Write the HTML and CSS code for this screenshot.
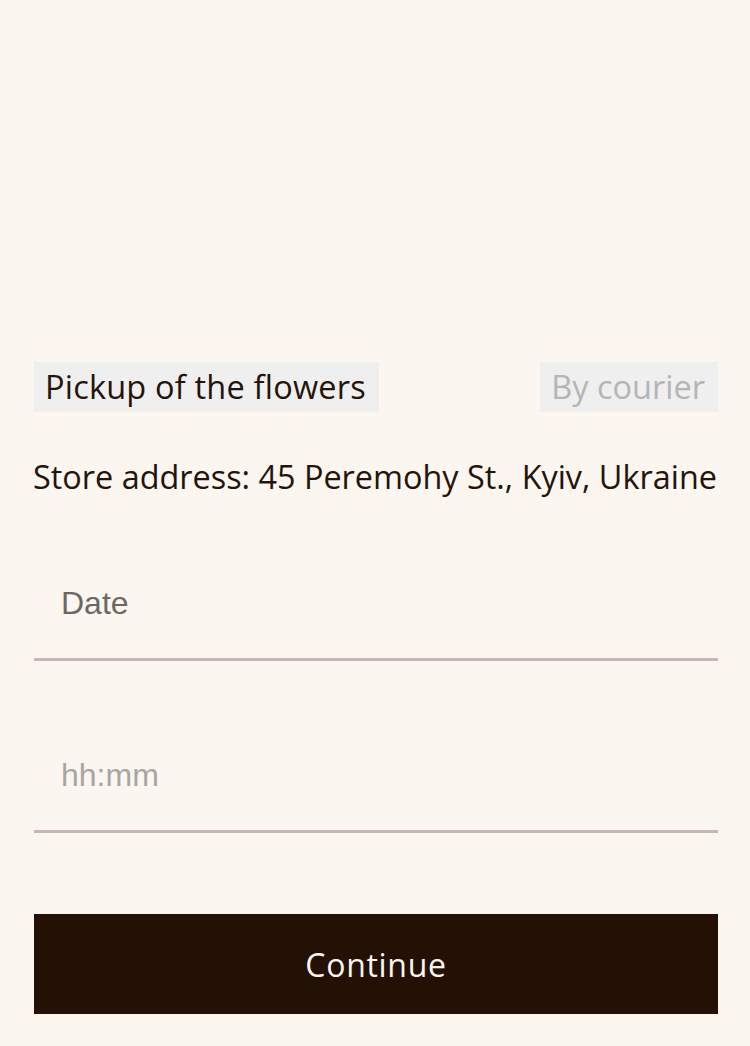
FILE: index.html
```html
<!DOCTYPE html>
<html lang="en">
<head>
<meta charset="utf-8">
<title>Delivery</title>
<link rel="stylesheet" href="styles.css">
</head>
<body>
<main class="page">
  <div class="tabs">
    <button class="tab tab--active" type="button">Pickup of the flowers</button>
    <button class="tab tab--inactive" type="button">By courier</button>
  </div>
  <p class="address">Store address: 45 Peremohy St., Kyiv, Ukraine</p>
  <form class="form">
    <label class="field">
      <input class="field__input field__input--date" type="text" placeholder="Date">
    </label>
    <label class="field">
      <input class="field__input field__input--time" type="text" placeholder="hh:mm">
    </label>
    <button class="continue" type="button">Continue</button>
  </form>
</main>
</body>
</html>
```

FILE: styles.css
```css
html, body {
  margin: 0;
  padding: 0;
  background: #fbf6f0;
}
body {
  font-family: "Open Sans", "Noto Sans", sans-serif;
  color: #25140a;
}
.page {
  width: 684px;
  margin: 0 0 0 34px;
  padding-top: 362px;
}
.tabs {
  display: flex;
  justify-content: space-between;
}
.tab {
  font-family: "Open Sans", sans-serif;
  font-size: 32.5px;
  height: 50px;
  padding: 0 13px 0 11px;
  border: 0;
  background: #efefef;
  line-height: 50px;
}
.tab--active {
  color: #25140a;
  letter-spacing: 0.2px;
}
.tab--inactive {
  color: #b5b5b5;
  padding: 0 13px 0 11px;
}
.address {
  margin: 42px 0 0 -1px;
  font-size: 32.4px;
  line-height: 44px;
  white-space: nowrap;
}
.form {
  display: flex;
  flex-direction: column;
}
.field {
  display: block;
  margin-top: 63px;
}
.field + .field { margin-top: 72px; }
.field__input {
  display: block;
  width: 100%;
  box-sizing: border-box;
  height: 100px;
  border: 0;
  border-bottom: 3px solid #c7b6b9;
  background: transparent;
  padding: 0 27px 13px;
  font-family: "Liberation Sans", Arial, sans-serif;
  font-size: 32px;
  outline: none;
}
.field__input--date::placeholder { color: #6b6863; }
.field__input--time::placeholder { color: #a9a6a2; }
.continue {
  margin-top: 81px;
  height: 100px;
  border: 0;
  background: #241106;
  color: #fdf6ee;
  font-family: "Open Sans", sans-serif;
  font-size: 32px;
  letter-spacing: 0.7px;
}
```
